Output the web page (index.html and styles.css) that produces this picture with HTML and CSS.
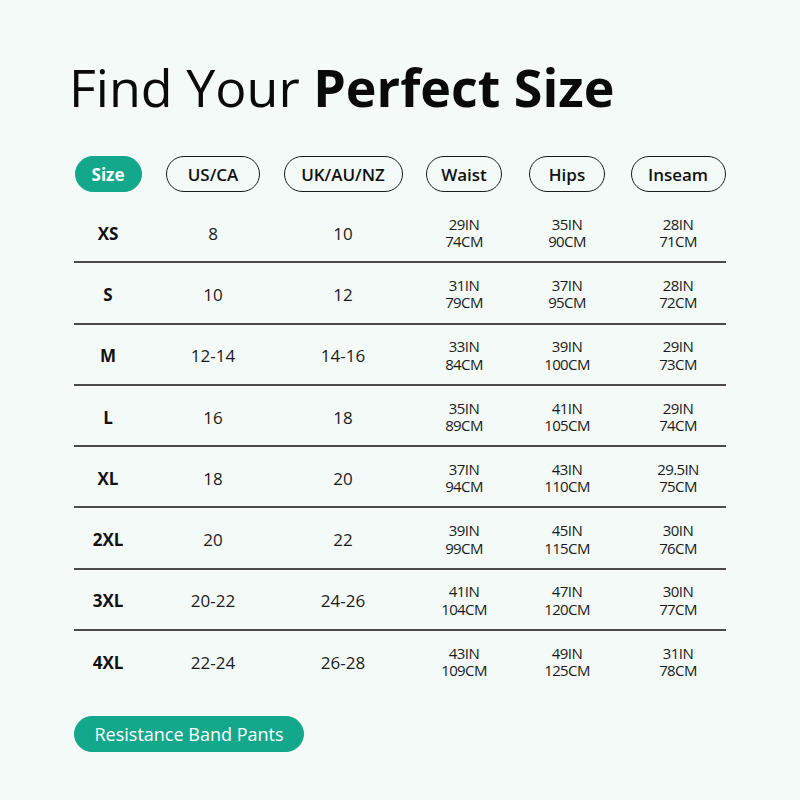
FILE: index.html
```html
<!DOCTYPE html>
<html>
<head>
<meta charset="utf-8">
<link rel="stylesheet" href="styles.css">
</head>
<body>
<div class="page">
  <h1 class="title">Find Your <b>Perfect Size</b></h1>
  <div class="grid head">
    <span class="pill pill-green">Size</span>
    <span class="pill">US/CA</span>
    <span class="pill">UK/AU/NZ</span>
    <span class="pill">Waist</span>
    <span class="pill">Hips</span>
    <span class="pill">Inseam</span>
  </div>
  <div class="table">
    <div class="grid row"><span class="sz">XS</span><span class="num">8</span><span class="num">10</span><span class="m">29IN<br>74CM</span><span class="m">35IN<br>90CM</span><span class="m">28IN<br>71CM</span></div>
    <div class="grid row"><span class="sz">S</span><span class="num">10</span><span class="num">12</span><span class="m">31IN<br>79CM</span><span class="m">37IN<br>95CM</span><span class="m">28IN<br>72CM</span></div>
    <div class="grid row"><span class="sz">M</span><span class="num">12-14</span><span class="num">14-16</span><span class="m">33IN<br>84CM</span><span class="m">39IN<br>100CM</span><span class="m">29IN<br>73CM</span></div>
    <div class="grid row"><span class="sz">L</span><span class="num">16</span><span class="num">18</span><span class="m">35IN<br>89CM</span><span class="m">41IN<br>105CM</span><span class="m">29IN<br>74CM</span></div>
    <div class="grid row"><span class="sz">XL</span><span class="num">18</span><span class="num">20</span><span class="m">37IN<br>94CM</span><span class="m">43IN<br>110CM</span><span class="m">29.5IN<br>75CM</span></div>
    <div class="grid row"><span class="sz">2XL</span><span class="num">20</span><span class="num">22</span><span class="m">39IN<br>99CM</span><span class="m">45IN<br>115CM</span><span class="m">30IN<br>76CM</span></div>
    <div class="grid row"><span class="sz">3XL</span><span class="num">20-22</span><span class="num">24-26</span><span class="m">41IN<br>104CM</span><span class="m">47IN<br>120CM</span><span class="m">30IN<br>77CM</span></div>
    <div class="grid row last"><span class="sz">4XL</span><span class="num">22-24</span><span class="num">26-28</span><span class="m">43IN<br>109CM</span><span class="m">49IN<br>125CM</span><span class="m">31IN<br>78CM</span></div>
  </div>
  <div class="footer"><span class="pill pill-green wide">Resistance Band Pants</span></div>
</div>
</body>
</html>
```
FILE: styles.css
```css
html, body {
  margin: 0;
  padding: 0;
  background: #f4faf8;
}
body {
  font-family: "Open Sans", "Noto Sans", sans-serif;
  color: #111;
  width: 800px;
  height: 800px;
  overflow: hidden;
}
.page {
  padding: 56px 74px 0 74px;
  width: 652px;
}
.title {
  margin: 0 0 0 -5px;
  font-size: 52px;
  line-height: 62px;
  font-weight: 400;
  letter-spacing: 0;
  color: #0a0a0a;
}
.title b {
  font-weight: 700;
}
.grid {
  display: grid;
  grid-template-columns: 68px 142px 118px 124px 82px 118px;
  justify-items: center;
  align-items: center;
}
.head {
  margin-top: 38px;
  height: 36px;
}
.head .pill:last-child {
  margin-left: 22px;
}
.row > :last-child {
  margin-left: 22px;
}
.pill {
  box-sizing: border-box;
  height: 36px;
  border: 1.5px solid #1a1a1a;
  border-radius: 18px;
  padding: 0 19px;
  display: inline-flex;
  align-items: center;
  justify-content: center;
  font-size: 17px;
  font-weight: 600;
  color: #111;
  white-space: nowrap;
}
.head .pill:nth-child(1) { width: 67px; }
.head .pill:nth-child(2) { width: 94px; }
.head .pill:nth-child(3) { width: 119px; }
.head .pill:nth-child(4) { width: 76px; }
.head .pill:nth-child(5) { width: 76px; }
.head .pill:nth-child(6) { width: 95px; }
.pill-green {
  background: #13a88c;
  border-color: #13a88c;
  color: #fff;
  font-weight: 700;
}
.table {
  margin-top: 10px;
}
.row {
  box-sizing: content-box;
  height: 56.3px;
  padding-top: 3px;
  border-bottom: 2px solid #4a4a4a;
}
.row.last {
  border-bottom: none;
}
.sz {
  font-size: 17px;
  font-weight: 700;
  color: #111;
}
.num {
  font-size: 17px;
  font-weight: 400;
  color: #1a1a1a;
}
.m {
  font-size: 15px;
  line-height: 17.5px;
  letter-spacing: -0.6px;
  text-align: center;
  color: #1a1a1a;
}
.footer {
  margin-top: 26px;
}
.footer .wide {
  width: 230px;
  font-size: 18px;
  font-weight: 500;
  padding: 0;
}
```
